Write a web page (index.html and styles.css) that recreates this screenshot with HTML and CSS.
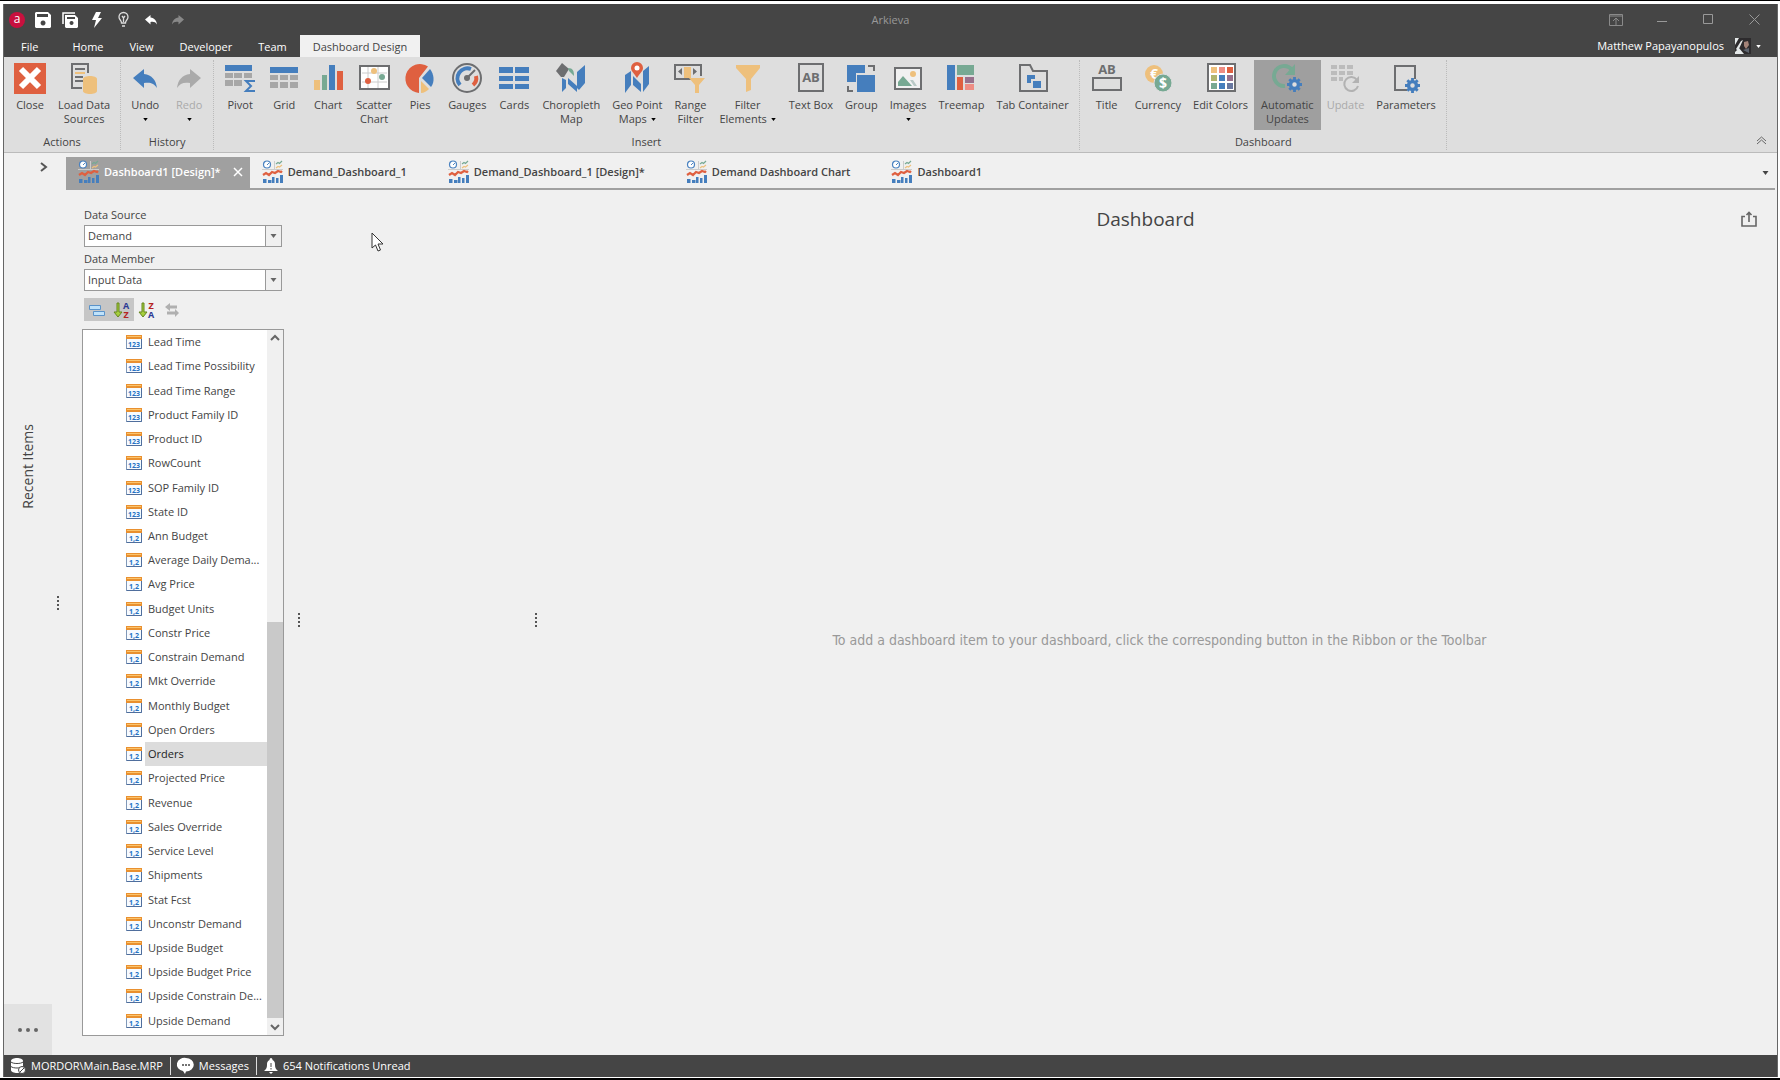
FILE: index.html
```html
<!DOCTYPE html>
<html lang="en">
<head>
<meta charset="utf-8">
<title>Arkieva</title>
<link rel="stylesheet" href="styles.css">
</head>
<body>
<svg class="sprite" aria-hidden="true">
  <symbol id="dash" viewBox="0 0 21 23">
    <path d="M12.500 1v8M0 9.500h21" stroke="#ccc" fill="none"/>
    <circle cx="5" cy="4.500" r="3.500" fill="#fff" stroke="#4a82c0" stroke-width="1.200"/>
    <path d="M5 5l2-2" stroke="#4a82c0"/>
    <path d="M14 4l2-1.500 1.500 1L20 1" stroke="#77a993" fill="none" stroke-width="1.200"/>
    <path d="M14 8l2-1.500 1.500 .5L20 5" stroke="#eec07c" fill="none" stroke-width="1.200"/>
    <path d="M1 15l3-2 3 2 3-3 3 1 3-2 3 1 1-1" stroke="#df6040" stroke-width="2.200" fill="none"/>
    <path d="M1 19h3.500v4H1zM6 20h3.500v3H6zM10 17h2.500v6H10zM14 18h2.500v5H14zM18 15h3v8h-3z" fill="#457ebd"/>
  </symbol>
  <symbol id="int" viewBox="0 0 16 14">
    <path d="M.5.5h15v13H.5z" fill="#f7fbff" stroke="#8098b8"/>
    <path d="M0 0h16v4H0z" fill="#e9902f"/><path d="M1 1.500h14" stroke="#fbc46c"/>
    <path d="M15.500 4v9.500H.5" stroke="#4f6e9d" fill="none"/>
    <text x="8" y="11.500" text-anchor="middle" class="glyph">123</text>
  </symbol>
  <symbol id="dec" viewBox="0 0 16 14">
    <path d="M.5.5h15v13H.5z" fill="#f7fbff" stroke="#8098b8"/>
    <path d="M0 0h16v4H0z" fill="#e9902f"/><path d="M1 1.500h14" stroke="#fbc46c"/>
    <path d="M15.500 4v9.500H.5" stroke="#4f6e9d" fill="none"/>
    <text x="8" y="11.500" text-anchor="middle" class="glyph">1,2</text>
  </symbol>
  <symbol id="gear" viewBox="0 0 16 16">
    <path d="M8 0v16M0 8h16M2.500 2.500l11 11M13.500 2.500l-11 11" stroke="#457ebd" stroke-width="3"/>
    <circle cx="8" cy="8" r="4.200" fill="#dedede" stroke="#457ebd" stroke-width="3.600"/>
  </symbol>
  <symbol id="undo" viewBox="0 0 24 20">
    <path d="M0 9L11 0v5c8 1 12 6 13 14-3-5-7-6-13-5v5z" fill="currentColor"/>
  </symbol>
  <symbol id="down" viewBox="0 0 6 4"><path d="M0 0h6L3 4z" fill="currentColor"/></symbol>
</svg>

<div class="window">
  <header class="top">
    <div class="titlebar">
      <div class="quick">
        <span class="logo">a</span>
        <button aria-label="Save"><svg width="16" height="16" viewBox="0 0 16 16"><path fill="#fff" fill-rule="evenodd" d="M1 0h12l3 3v12l-1 1H1l-1-1V1zM2 2v3h11V2zM8 8.500a2.500 2.500 0 1 0 .1 0z"/></svg></button>
        <button aria-label="Save all"><svg width="16" height="16" viewBox="0 0 16 16"><path d="M1 12V1h12" fill="none" stroke="#fff" stroke-width="1.500"/><path fill="#fff" fill-rule="evenodd" d="M3 3h10l3 3v9l-1 1H4l-1-1zM5 5v2h8V5zM9.500 9a2 2 0 1 0 .1 0z"/></svg></button>
        <button aria-label="Run"><svg width="10" height="16" viewBox="0 0 10 16"><path fill="#fff" d="M4 0h5L6 6h4L2 16l2-8H0z"/></svg></button>
        <button aria-label="Hint"><svg width="11" height="15" viewBox="0 0 11 15"><path fill="none" stroke="#ddd" stroke-width="1.300" d="M3.500 11C3.500 8 1 8 1 5a4.500 4.500 0 0 1 9 0c0 3-2.500 3-2.500 6zM4 14h3M4 4l1.500 2L7 4M5.500 6v4"/></svg></button>
        <button aria-label="Undo"><svg width="12" height="10"><use href="#undo"/></svg></button>
        <button class="dim" aria-label="Redo"><svg class="flip" width="12" height="10"><use href="#undo"/></svg></button>
      </div>
      <h1>Arkieva</h1>
      <div class="controls">
        <button aria-label="Ribbon options"><svg width="14" height="12" viewBox="0 0 14 12"><path d="M.5.5h13v11H.5zM0 2h14M7 11V4M4 7l3-3 3 3" fill="none" stroke="#8a8a8a"/></svg></button>
        <button aria-label="Minimize"><svg width="10" height="11"><path d="M0 7.500h10" stroke="#999"/></svg></button>
        <button aria-label="Maximize"><svg width="10" height="11"><path d="M.5.5h9v9h-9z" fill="none" stroke="#999"/></svg></button>
        <button aria-label="Close window"><svg width="11" height="11"><path d="M.5.5l10 10M10.500.5l-10 10" stroke="#999"/></svg></button>
      </div>
    </div>
    <nav class="menu">
      <a href="#" class="file">File</a><a href="#">Home</a><a href="#">View</a><a href="#">Developer</a><a href="#">Team</a><a href="#" class="on">Dashboard Design</a>
      <button class="user">Matthew Papayanopulos
        <svg width="16" height="16"><path fill="#2d2b2d" d="M0 0h16v16H0z"/><path d="M0 0h4L0 7zM1 11l5-8 2-1-5 11zM0 16v-2l4-4 5 6z" fill="#e4e8e8"/><path d="M9 4l4-1 1 4-3 4-2-3z" fill="#a38378"/><path d="M8 12l6-2v5z" fill="#5e6570"/></svg>
        <svg width="5" height="3"><use href="#down"/></svg></button>
    </nav>
  </header>

  <section class="ribbon" aria-label="Dashboard Design">
    <div class="group actions">
      <div class="tools">
        <button><svg width="32" height="32"><path fill="#df6040" d="M0 1h32v31H0z"/><path d="M7 7l18 18M25 7L7 25" stroke="#fff" stroke-width="6"/></svg>Close</button>
        <button><svg width="32" height="32"><path d="M20 11V2H4v24h10" fill="none" stroke="#6d6e70" stroke-width="2"/><path d="M7 7h10M7 15h8M7 19h8" stroke="#6d6e70" stroke-width="2"/><path d="M7 11h10" stroke="#eec07c" stroke-width="2"/><path d="M15 17c0-4 14-4 14 0v12c0 4-14 4-14 0z" fill="#eec07c"/></svg>Load Data<br>Sources</button>
      </div>
      <h2>Actions</h2>
    </div>
    <div class="group history">
      <div class="tools">
        <button class="blue"><svg width="32" height="32" viewBox="-4 -7 32 32"><use href="#undo" width="24" height="20"/></svg><span>Undo</span><svg class="arrow"><use href="#down"/></svg></button>
        <button class="off"><svg class="flip" width="32" height="32" viewBox="-4 -7 32 32"><use href="#undo" width="24" height="20"/></svg><span>Redo</span><svg class="arrow"><use href="#down"/></svg></button>
      </div>
      <h2>History</h2>
    </div>
    <div class="group insert">
      <div class="tools">
        <button><svg width="32" height="32"><path fill="#457ebd" d="M1 3h27v6H1z"/><path fill="#a7a7a7" d="M1 11h8v5H1zM10 11h8v5h-8zM20 11h8v5h-8zM1 18h8v6H1zM10 18h8v6h-8z"/><path d="M31 19H22l5 5-5 5h9" fill="none" stroke="#457ebd" stroke-width="2"/></svg>Pivot</button>
        <button><svg width="32" height="32"><path fill="#457ebd" d="M2 5h28v6H2z"/><path fill="#a7a7a7" d="M2 13h8v5H2zM12 13h8v5h-8zM22 13h8v5h-8zM2 20h8v6H2zM12 20h8v6h-8zM22 20h8v6h-8z"/></svg>Grid</button>
        <button><svg width="32" height="32"><path fill="#eec07c" d="M2 18h6v10H2z"/><path fill="#77a993" d="M10 13h5v15h-5z"/><path fill="#457ebd" d="M17 3h6v25h-6z"/><path fill="#df6040" d="M25 9h6v19h-6z"/></svg>Chart</button>
        <button><svg width="32" height="32"><path d="M2 4h29v23H2z" fill="#fff" stroke="#6d6e70" stroke-width="2"/><path d="M4 11h25M4 20h25M10 5v21M20 5v21" stroke="#ccc"/><circle cx="16" cy="9" r="3" fill="#eec07c"/><circle cx="24" cy="15" r="3" fill="#77a993"/><circle cx="10" cy="19" r="3" fill="#df6040"/></svg>Scatter<br>Chart</button>
        <button><svg width="32" height="32"><path d="M15 16l9-11.500A14.500 14.500 0 1 0 15 31z" fill="#df6040"/><path d="M18 16l8-9c4 5 5 13 1 18z" fill="#457ebd"/><path d="M17 19l8 8c-2 2-5 4-8 4z" fill="#eec07c"/></svg>Pies</button>
        <button><svg width="32" height="32"><circle cx="16" cy="16" r="14" fill="none" stroke="#6d6e70" stroke-width="2"/><path d="M9 23A10 10 0 0 1 20 7" fill="none" stroke="#457ebd" stroke-width="4"/><path d="M25 14a9 9 0 0 1-3 9" fill="none" stroke="#df6040" stroke-width="4"/><circle cx="16" cy="16" r="3" fill="#6d6e70"/><path d="M16 16l8-8" stroke="#6d6e70" stroke-width="2"/></svg>Gauges</button>
        <button><svg width="32" height="32"><path fill="#457ebd" d="M1 5h14v6H1zM17 5h14v6H17zM1 14h14v5H1zM17 14h14v5H17zM1 22h14v5H1zM17 22h14v5H17z"/></svg>Cards</button>
        <button><svg width="32" height="32"><path d="M7 16l4 2v8l-4 4zM13 16l9 8v6l-9-8zM22 10l8-7v18l-6 7-2-2z" fill="#457ebd"/><path d="M7 1l7 6-5 8H6L1 9z" fill="#6d6e70"/><path d="M13 6c5 0 6 3 6 8l-5-5z" fill="#77a993"/></svg>Choropleth<br>Map</button>
        <button><svg width="32" height="32"><path d="M4 13l6-4v14l-6 8zM12 14l8 8v8l-8-7zM22 9l6-5v18l-6 8z" fill="#457ebd"/><path d="M16 16c-3-5-6-7-6-10a6 6 0 0 1 12 0c0 3-3 5-6 10z" fill="#df6040"/><circle cx="16" cy="6" r="2.500" fill="#fff"/></svg>Geo Point<br><span>Maps <svg class="arrow"><use href="#down"/></svg></span></button>
        <button><svg width="32" height="32"><path d="M17 17H1V3h26v11" fill="none" stroke="#6d6e70" stroke-width="2"/><path fill="#eec07c" d="M10 5h7v11h-7zM15 16h16l-6 7v8h-4v-8z"/><path fill="#6d6e70" d="M8 6v7l-4-3.500zM19 6v7l4-3.500z"/></svg>Range<br>Filter</button>
        <button class="wide"><svg width="32" height="32"><path fill="#eec07c" d="M4 3h24v3l-9 11v11l-5 2V17L4 6z"/></svg>Filter<br><span>Elements <svg class="arrow"><use href="#down"/></svg></span></button>
        <button><svg width="32" height="32"><path d="M4 2h24v27H4z" fill="none" stroke="#6d6e70" stroke-width="2"/><text x="16" y="20" text-anchor="middle" class="ab">AB</text></svg>Text Box</button>
        <button><svg width="32" height="32"><path fill="#457ebd" d="M2 3h18v8h-9v9H2zM12 13h18v17H12z"/><path d="M23 4h6v5M3 24v5h5" fill="none" stroke="#6d6e70" stroke-width="2"/></svg>Group</button>
        <button><svg width="32" height="32"><path d="M3 6h26v21H3z" fill="#f1f1f1" stroke="#6d6e70" stroke-width="2"/><circle cx="21" cy="12" r="3" fill="#eec07c"/><path d="M6 24v-4l5-6 9 10z" fill="#77a993"/><path d="M18 18h3l4 6h-3z" fill="#b9c9c6"/></svg><span>Images</span><svg class="arrow"><use href="#down"/></svg></button>
        <button><svg width="32" height="32"><path fill="#457ebd" d="M2 3h8v25H2z"/><path fill="#77a993" d="M12 3h17v10H12z"/><path fill="#df6040" d="M12 15h6v13h-6z"/><path fill="#98708c" d="M20 15h9v6h-9z"/><path fill="#ee8d84" d="M20 22h9v6h-9z"/></svg>Treemap</button>
        <button><svg width="32" height="32"><path d="M3 3h10l3 6h14v20H3z" fill="none" stroke="#6d6e70" stroke-width="2"/><path fill="#457ebd" d="M10 13h8v4h-4v4h-4zM16 19h8v7h-8z"/></svg>Tab Container</button>
      </div>
      <h2>Insert</h2>
    </div>
    <div class="group board">
      <div class="tools">
        <button><svg width="32" height="32"><path d="M2 16h28v12H2z" fill="none" stroke="#6d6e70" stroke-width="2"/><text x="16" y="12" text-anchor="middle" class="ab">AB</text></svg>Title</button>
        <button><svg width="32" height="32"><circle cx="12" cy="12" r="9" fill="#eec07c"/><text x="12" y="17" text-anchor="middle" class="coin">€</text><circle cx="21" cy="21" r="9" fill="#77a993" stroke="#dedede"/><text x="21" y="26" text-anchor="middle" class="coin">$</text></svg>Currency</button>
        <button><svg width="32" height="32"><path d="M3 2h27v27H3z" fill="#fff" stroke="#6d6e70" stroke-width="2"/><path fill="#eec07c" d="M6 5h6v6H6z"/><path fill="#ee8d84" d="M14 5h6v6h-6z"/><path fill="#df6040" d="M22 5h6v6h-6z"/><path fill="#b0b56f" d="M6 13h6v6H6z"/><path fill="#457ebd" d="M14 13h6v6h-6zM14 21h6v6h-6z"/><path fill="#98708c" d="M22 13h6v6h-6z"/><path fill="#77a993" d="M6 21h6v6H6z"/><path fill="#6878a0" d="M22 21h6v6h-6z"/></svg>Edit Colors</button>
        <button class="wide pressed" aria-pressed="true"><svg width="32" height="32"><path d="M14 24A10 10 0 1 1 21 8" fill="none" stroke="#77a993" stroke-width="4"/><path d="M24 2v11H14z" fill="#77a993"/><use href="#gear" x="16" y="15" width="15" height="15"/></svg>Automatic<br>Updates</button>
        <button class="off"><svg width="32" height="32"><path fill="#bcbcbc" d="M2 3h6v4H2zM10 3h6v4h-6zM18 3h6v4h-6zM2 9h6v4H2zM10 9h6v4h-6zM18 9h6v4h-6zM2 15h6v4H2zM10 15h4v4h-4z"/><path d="M28 18a7 7 0 1 0 1 6" fill="none" stroke="#b2b2b2" stroke-width="2"/><path d="M30 14v7h-7z" fill="#b2b2b2"/></svg>Update</button>
        <button><svg width="32" height="32"><path d="M17 28H5V4h20v13" fill="none" stroke="#6d6e70" stroke-width="2"/><use href="#gear" x="15" y="16" width="15" height="15"/></svg>Parameters</button>
      </div>
      <h2>Dashboard</h2>
    </div>
    <button class="collapse" aria-label="Collapse ribbon"><svg width="11" height="9"><path d="M1 5l4.500-4L10 5M1 8l4.500-4L10 8" fill="none" stroke="#666"/></svg></button>
  </section>

  <main class="body">
    <aside class="rail">
      <button class="expand" aria-label="Expand"><svg width="7" height="10"><path d="M1 1l5 4-5 4" fill="none" stroke="#555" stroke-width="2"/></svg></button>
      <span class="recent">Recent Items</span>
      <button class="more" aria-label="More"><i></i><i></i><i></i></button>
      <div class="grip outer"></div>
    </aside>
    <div class="work">
      <nav class="tabs">
        <a href="#" class="on"><svg width="21" height="23"><use href="#dash"/></svg>Dashboard1 [Design]*<svg class="x" width="8" height="8"><path d="M0 0l8 8M8 0L0 8" stroke="#fff" stroke-width="1.500"/></svg></a>
        <a href="#"><svg width="21" height="23"><use href="#dash"/></svg>Demand_Dashboard_1</a>
        <a href="#"><svg width="21" height="23"><use href="#dash"/></svg>Demand_Dashboard_1 [Design]*</a>
        <a href="#"><svg width="21" height="23"><use href="#dash"/></svg>Demand Dashboard Chart</a>
        <a href="#"><svg width="21" height="23"><use href="#dash"/></svg>Dashboard1</a>
        <button class="list" aria-label="All tabs"><svg width="7" height="4"><use href="#down"/></svg></button>
      </nav>
      <div class="designer">
        <section class="source">
          <label for="src">Data Source</label>
          <div class="combo"><select id="src"><option>Demand</option></select><span><svg width="7" height="4"><use href="#down"/></svg></span></div>
          <label for="member">Data Member</label>
          <div class="combo"><select id="member"><option>Input Data</option></select><span><svg width="7" height="4"><use href="#down"/></svg></span></div>
          <div class="sorts">
            <button class="on" aria-label="Group fields"><svg width="16" height="12"><path d="M.5 1.500h11v4H.5zM4.500 7.500h11v4h-11z" fill="#bfe2fa" stroke="#5b93c9"/></svg></button>
            <button class="on" aria-label="Sort ascending"><svg width="8" height="16"><path d="M3 1h2v9h3l-4 5-4-5h3z" fill="#a6cf3d" stroke="#66871f"/></svg><span class="az"><b class="navy">A</b><b class="red">Z</b></span></button>
            <button aria-label="Sort descending"><svg width="8" height="16"><path d="M3 1h2v9h3l-4 5-4-5h3z" fill="#a6cf3d" stroke="#66871f"/></svg><span class="az"><b class="red">Z</b><b class="navy">A</b></span></button>
            <button aria-label="Swap"><svg width="14" height="14"><path d="M0 4l5-4v2.500h7v3H5V8zM14 10l-4-4v2.500H2v3h8V14z" fill="#b0b0b0"/></svg></button>
          </div>
          <div class="tree">
            <ul>
              <li><svg><use href="#int"/></svg><span>Lead Time</span></li>
              <li><svg><use href="#int"/></svg><span>Lead Time Possibility</span></li>
              <li><svg><use href="#int"/></svg><span>Lead Time Range</span></li>
              <li><svg><use href="#int"/></svg><span>Product Family ID</span></li>
              <li><svg><use href="#int"/></svg><span>Product ID</span></li>
              <li><svg><use href="#int"/></svg><span>RowCount</span></li>
              <li><svg><use href="#int"/></svg><span>SOP Family ID</span></li>
              <li><svg><use href="#int"/></svg><span>State ID</span></li>
              <li><svg><use href="#dec"/></svg><span>Ann Budget</span></li>
              <li><svg><use href="#dec"/></svg><span>Average Daily Dema...</span></li>
              <li><svg><use href="#dec"/></svg><span>Avg Price</span></li>
              <li><svg><use href="#dec"/></svg><span>Budget Units</span></li>
              <li><svg><use href="#dec"/></svg><span>Constr Price</span></li>
              <li><svg><use href="#dec"/></svg><span>Constrain Demand</span></li>
              <li><svg><use href="#dec"/></svg><span>Mkt Override</span></li>
              <li><svg><use href="#dec"/></svg><span>Monthly Budget</span></li>
              <li><svg><use href="#dec"/></svg><span>Open Orders</span></li>
              <li class="sel"><svg><use href="#dec"/></svg><span>Orders</span></li>
              <li><svg><use href="#dec"/></svg><span>Projected Price</span></li>
              <li><svg><use href="#dec"/></svg><span>Revenue</span></li>
              <li><svg><use href="#dec"/></svg><span>Sales Override</span></li>
              <li><svg><use href="#dec"/></svg><span>Service Level</span></li>
              <li><svg><use href="#dec"/></svg><span>Shipments</span></li>
              <li><svg><use href="#dec"/></svg><span>Stat Fcst</span></li>
              <li><svg><use href="#dec"/></svg><span>Unconstr Demand</span></li>
              <li><svg><use href="#dec"/></svg><span>Upside Budget</span></li>
              <li><svg><use href="#dec"/></svg><span>Upside Budget Price</span></li>
              <li><svg><use href="#dec"/></svg><span>Upside Constrain De...</span></li>
              <li><svg><use href="#dec"/></svg><span>Upside Demand</span></li>
            </ul>
            <div class="scroll">
              <svg width="8" height="6"><path d="M0 5l4-4 4 4" fill="none" stroke="#666" stroke-width="2"/></svg>
              <div class="track"><div class="thumb"></div></div>
              <svg width="8" height="6"><path d="M0 1l4 4 4-4" fill="none" stroke="#666" stroke-width="2"/></svg>
            </div>
          </div>
        </section>
        <div class="grip"></div>
        <section class="bindings"></section>
        <div class="grip"></div>
        <section class="canvas">
          <div class="head"><h2>Dashboard</h2><button aria-label="Export"><svg width="16" height="16"><path d="M4 5.500H1V15h14V5.500h-3M8 11V2M5.500 4L8 1.500 10.500 4" fill="none" stroke="#666" stroke-width="1.600"/></svg></button></div>
          <p>To add a dashboard item to your dashboard, click the corresponding button in the Ribbon or the Toolbar</p>
        </section>
      </div>
    </div>
  </main>

  <footer class="status">
    <span><svg width="15" height="16"><path d="M0 3c0-4 12-4 12 0v9c0 4-12 4-12 0z" fill="#fff"/><path d="M0 4c2 2 10 2 12 0M0 8.500c2 2 10 2 12 0" fill="none" stroke="#454545"/><circle cx="11" cy="12" r="3.500" fill="#fff" stroke="#454545"/><path d="M9 14l4-4" stroke="#454545"/></svg>MORDOR\Main.Base.MRP</span>
    <span><svg width="16" height="16"><path d="M8 0a7.500 6.500 0 0 1 0 13.500L7 16l-2-3A7.500 6.500 0 0 1 8 0z" fill="#fff"/><path d="M4 7h2M7 7h2M10 7h2" stroke="#454545" stroke-width="1.500"/></svg>Messages</span>
    <span><svg width="14" height="16"><path d="M7 0c1 0 1.500 1 1.500 2C11 3 11 5 11 7c0 3 1 4 3 6H0c2-2 3-3 3-6 0-2 0-4 2.500-5C5.500 1 6 0 7 0zM5 14h4l-2 2z" fill="#fff"/><path d="M7 5v4M7 10v1.500" stroke="#454545"/></svg>654 Notifications Unread</span>
  </footer>
</div>
<svg class="pointer" width="13" height="20" aria-hidden="true"><path d="M1 1v15l3.500-3 2.500 6 2.500-1-2.500-6h5z" fill="#fff" stroke="#333"/></svg>
</body>
</html>
```
FILE: styles.css
```css
* { box-sizing: border-box; margin: 0; }
body {
  font: 11px/14px "Open Sans", "Noto Sans", sans-serif;
  color: #444;
  background: #fff;
  border: solid #000;
  border-width: 1px 0 2px;
  padding: 3px 2px 1px 3px;
  height: 100vh;
}
button { font: inherit; color: inherit; background: none; border: 0; padding: 0; }
a { color: inherit; text-decoration: none; }
svg { display: block; flex: none; overflow: visible; }
.sprite { position: absolute; width: 0; height: 0; }
.flip { transform: scaleX(-1); }
.glyph { font: bold 7px "Open Sans", sans-serif; fill: #2672c4; }
.ab { font: bold 13px "Open Sans", sans-serif; fill: #6d6e70; }
.coin { font: bold 14px "Open Sans", sans-serif; fill: #fff; }

.window { height: 100%; display: flex; flex-direction: column; background: #f0f0f0; border: solid #666; border-width: 0 1px; }

.top { background: #454545; color: #fff; }
.titlebar { display: grid; grid-template-columns: 1fr auto 1fr; align-items: center; height: 31px; }
.titlebar h1 { font-size: 11px; font-weight: 400; color: #999; }
.quick { display: flex; align-items: center; padding-left: 5px; }
.quick button { width: 27px; display: grid; place-items: center; }
.quick .dim { color: #888; }
.logo { width: 16px; height: 16px; margin-right: 4px; border-radius: 50%; background: #c8103e; font-size: 12px; line-height: 14px; text-align: center; }
.controls { display: flex; justify-content: flex-end; }
.controls button { width: 46px; display: grid; place-items: center; }
.menu { display: flex; height: 22px; line-height: 24px; }
.menu a { padding: 0 13px; }
.menu .file { padding: 0 21px 0 17px; }
.menu .on { background: #f1f1f1; color: #444; }
.user { margin-left: auto; padding-right: 16px; display: flex; align-items: center; gap: 5px; }
.user svg:first-of-type { margin-left: 6px; }

.ribbon { display: flex; position: relative; height: 96px; background: #dedede; border-bottom: 1px solid #bbb; }
.group { display: flex; flex-direction: column; margin: 3px 0 2px; border-right: 1px dotted #bbb; }
.tools { display: flex; flex: 1; }
.group h2 { font-size: 11px; font-weight: 400; line-height: 16px; text-align: center; }
.tools button { display: flex; flex-direction: column; align-items: center; height: 70px; min-width: 44px; padding: 2px 6px 0; white-space: nowrap; }
.tools .wide { padding: 2px 7px 0; }
.tools button > svg:first-child { margin-bottom: 4px; }
.tools button > span { display: flex; align-items: center; gap: 4px; }
.arrow { width: 5px; height: 3px; color: #000; }
.tools button > .arrow { margin-top: 6px; }
.tools .blue { color: #457ebd; }
.tools .blue span { color: #444; }
.tools .off { color: #aaa; }
.tools .pressed { background: #9f9f9f; }
.actions { padding: 0 4px; }
.history { padding: 0 2px; }
.insert { padding: 0 4px; }
.board { padding: 0 4px 0 5px; }
.collapse { position: absolute; right: 10px; bottom: 7px; }

.body { flex: 1; display: flex; min-height: 0; }
.rail { position: relative; width: 62px; display: flex; flex-direction: column; justify-content: space-between; align-items: flex-start; }
.expand { margin: 9px 0 0 36px; }
.recent { writing-mode: vertical-rl; transform: rotate(180deg); margin: 0 0 244px 14px; font-size: 14px; line-height: 20px; }
.more { width: 48px; height: 51px; background: #e2e2e2; display: flex; gap: 4px; align-items: center; justify-content: center; }
.more i { width: 4px; height: 4px; border-radius: 50%; background: #666; }
.grip { width: 3px; align-self: center; height: 15px; margin: 0 5px 4px; background: repeating-linear-gradient(#555 0 2px, transparent 2px 4px) center / 2px 100% no-repeat; }
.grip.outer { position: absolute; right: 2px; top: 443px; }

.work { flex: 1; display: flex; flex-direction: column; min-width: 0; }
.tabs { display: flex; margin: 4px 2px 0 0; height: 33px; border-bottom: 2px solid #a0a0a0; font-weight: 600; }
.tabs a { display: flex; align-items: center; gap: 5px; padding: 0 29px 2px 12px; }
.tabs .on { background: #a0a0a0; color: #fff; padding-right: 8px; }
.tabs .x { margin-left: 8px; }
.list { margin-left: auto; padding: 0 6px; }

.designer { flex: 1; display: flex; min-height: 0; }
.source { width: 226px; padding: 16px 0 19px 16px; display: flex; flex-direction: column; }
.source label { margin: 0 0 1px 2px; line-height: 18px; }
.combo { display: flex; width: 198px; height: 22px; margin: 0 0 3px 2px; border: 1px solid #999; background: #fff; }
.combo select { flex: 1; appearance: none; border: 0; padding: 0 3px; font: inherit; color: inherit; background: none; }
.combo span { width: 16px; border-left: 1px solid #999; display: grid; place-items: center; background: #f0f0f0; color: #666; }
.sorts { display: flex; margin: 4px 0 8px 2px; }
.sorts button { width: 25px; height: 23px; display: flex; align-items: center; justify-content: center; gap: 1px; }
.sorts .on { background: #c6c6c6; }
.az { display: flex; flex-direction: column; font-size: 9px; line-height: 9px; }
.navy { color: #2c3a94; }
.red { color: #b52222; }
.tree { flex: 1; display: flex; width: 202px; border: 1px solid #999; background: #fff; min-height: 0; }
.tree ul { flex: 1; display: flex; flex-direction: column; list-style: none; padding: 0 0 2px; min-width: 0; }
.tree li { flex: 1; display: flex; align-items: center; gap: 3px; padding-left: 43px; }
.tree li svg { width: 16px; height: 14px; }
.tree li span { flex: 1; align-self: stretch; display: flex; align-items: center; padding-left: 3px; white-space: nowrap; }
.tree .sel span { background: #dcdcdc; color: #222; }
.scroll { width: 16px; display: flex; flex-direction: column; align-items: center; background: #f0f0f0; padding: 5px 0; gap: 6px; }
.track { flex: 1; width: 100%; display: flex; flex-direction: column; justify-content: flex-end; }
.thumb { height: 59%; background: #c9c9c9; }
.bindings { width: 224px; }
.canvas { flex: 1; display: flex; flex-direction: column; }
.head { display: flex; align-items: center; height: 58px; }
.head h2 { flex: 1; padding-left: 8px; text-align: center; font-size: 19px; font-weight: 400; line-height: 26px; }
.head button { margin-right: 20px; }
.canvas p { flex: 1; display: grid; place-items: center; padding-bottom: 24px; font: 14px/20px "DejaVu Sans Condensed", "Open Sans", sans-serif; color: #999; }

.status { display: flex; align-items: center; height: 22px; background: #454545; color: #fff; }
.status span { display: flex; align-items: center; gap: 5px; padding: 0 7px; border-right: 1px solid #ddd; line-height: 18px; }
.status span:last-child { border: 0; }
.pointer { position: absolute; left: 371px; top: 232px; }
```
